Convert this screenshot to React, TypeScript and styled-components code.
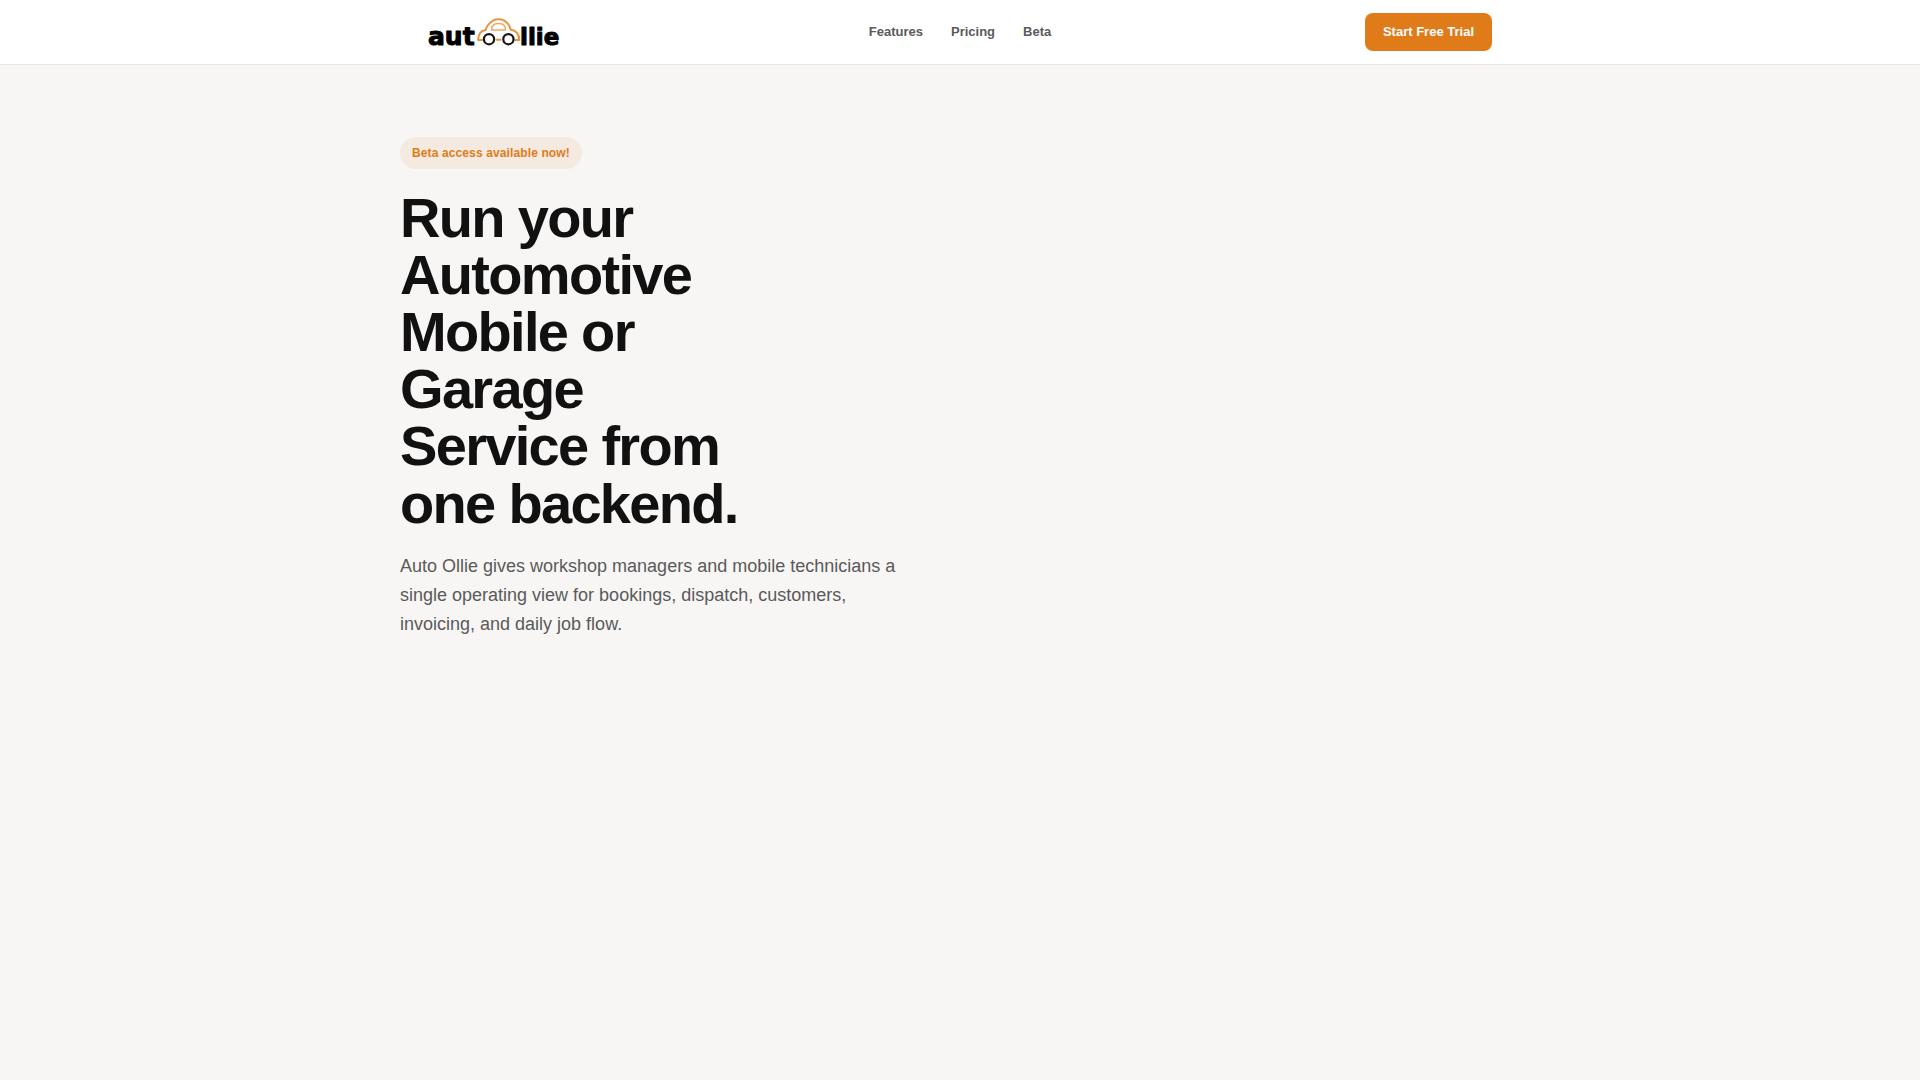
import React from "react";
import styled, { createGlobalStyle } from "styled-components";

const GlobalStyle = createGlobalStyle`
  *, *::before, *::after { box-sizing: border-box; }
  body {
    margin: 0;
    background: #f7f6f4;
    color: #111;
    font-family: "Liberation Sans", Arial, sans-serif;
  }
`;

const Page = styled.div`
  min-height: 100vh;
`;

const Header = styled.header`
  background: #fff;
  border-bottom: 1px solid #e8e6e3;
`;

const HeaderInner = styled.div`
  display: grid;
  grid-template-columns: 1fr auto 1fr;
  align-items: center;
  max-width: 1120px;
  min-height: 64px;
  margin: 0 auto;
  padding: 0 28px;
`;

const Brand = styled.a`
  display: flex;
  justify-self: start;
`;

const LogoMark = styled.svg`
  display: block;
  width: 132px;
  height: 36px;
`;

const Letters = styled.text<{ $size: number }>`
  font-family: "DejaVu Sans", sans-serif;
  font-weight: 700;
  font-size: ${(p) => p.$size}px;
  fill: #000;
  stroke: #000;
  stroke-width: 1;
  stroke-linejoin: round;
`;

const Nav = styled.nav`
  display: flex;
  gap: 28px;
`;

const NavLink = styled.a`
  color: #5a5a5a;
  font-size: 13px;
  font-weight: 700;
  line-height: 20px;
  text-decoration: none;
`;

const TrialButton = styled.button`
  justify-self: end;
  padding: 9px 18px;
  border: 0;
  border-radius: 8px;
  background: #e07b1a;
  color: #fff;
  font-family: inherit;
  font-size: 13px;
  font-weight: 700;
  line-height: 20px;
  cursor: pointer;
`;

const Hero = styled.main`
  max-width: 1120px;
  margin: 0 auto;
  padding: 72px 0;
`;

const Badge = styled.span`
  display: inline-flex;
  align-items: center;
  height: 32px;
  padding: 0 12px;
  border-radius: 16px;
  background: #f5eadf;
  color: #e07b1a;
  font-size: 12px;
  font-weight: 700;
  letter-spacing: 0.01em;
`;

const Title = styled.h1`
  max-width: 12ch;
  margin: 20px 0;
  font-size: 56px;
  font-weight: 700;
  line-height: 1.02;
  letter-spacing: -0.03em;
`;

const Lead = styled.p`
  max-width: 520px;
  margin: 0;
  color: #5a5a5a;
  font-size: 18px;
  line-height: 29px;
`;

function Logo() {
  return (
    <LogoMark viewBox="0 0 132 36" role="img" aria-label="Auto Ollie">
      <Letters $size={25} x="0" y="31">aut</Letters>
      <g fill="none" strokeLinecap="round" strokeLinejoin="round">
        <path
          d="M54.500 26H50.200C50 20.500 52.500 17 57.500 16C58.500 13.500 59 11.500 61 10C63.500 6.800 66.500 5.200 70.500 5.200C75 5.200 78.500 7.500 80.500 10.500C81.700 12.300 82 14.500 83 15.800C88.500 16.800 91.200 20.500 91.200 26H87M68.500 25.800H72.500"
          stroke="#e8943c"
          strokeWidth="2"
        />
        <path
          d="M63.500 16C63.500 11.500 66 9.500 70.500 9.500C75 9.500 77.500 12 77.500 16Z"
          stroke="#f0a860"
          strokeWidth="1.400"
        />
        <circle cx="61" cy="25.200" r="5.100" stroke="#161616" strokeWidth="2.200" />
        <circle cx="80.400" cy="25.200" r="5.100" stroke="#161616" strokeWidth="2.200" />
      </g>
      <Letters $size={23} x="92" y="31">llie</Letters>
    </LogoMark>
  );
}

export default function App() {
  return (
    <Page>
      <GlobalStyle />
      <Header>
        <HeaderInner>
          <Brand href="#"><Logo /></Brand>
          <Nav aria-label="Main">
            <NavLink href="#features">Features</NavLink>
            <NavLink href="#pricing">Pricing</NavLink>
            <NavLink href="#beta">Beta</NavLink>
          </Nav>
          <TrialButton type="button">Start Free Trial</TrialButton>
        </HeaderInner>
      </Header>
      <Hero>
        <Badge>Beta access available now!</Badge>
        <Title>Run your Automotive Mobile or Garage Service from one backend.</Title>
        <Lead>
          Auto Ollie gives workshop managers and mobile technicians a single
          operating view for bookings, dispatch, customers, invoicing, and daily
          job flow.
        </Lead>
      </Hero>
    </Page>
  );
}
